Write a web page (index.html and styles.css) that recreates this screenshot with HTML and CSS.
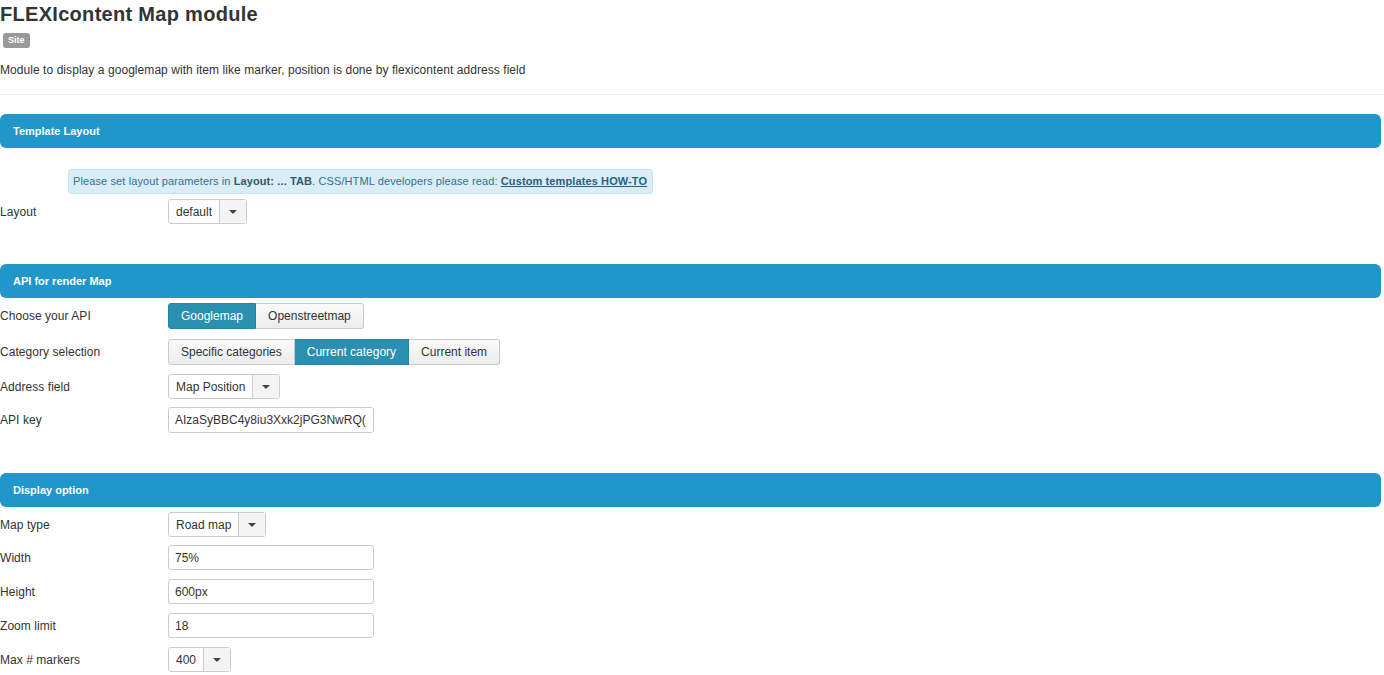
FILE: index.html
```html
<!DOCTYPE html>
<html lang="en">
<head>
    <meta charset="UTF-8">
    <meta name="viewport" content="width=device-width, initial-scale=1.0">
    <title>FLEXIcontent Map module</title>
    <link rel="stylesheet" href="styles.css">
</head>
<body>
    <div class="page-head">
        <h1>FLEXIcontent Map module</h1>
        <span class="badge">Site</span>
        <p class="desc">Module to display a googlemap with item like marker, position is done by flexicontent address field</p>
    </div>

    <!-- Template Layout -->
    <div class="block-title">Template Layout</div>
    <div class="alert">Please set layout parameters in <b>Layout: ... TAB</b>. CSS/HTML developers please read: <a href="#">Custom templates HOW-TO</a></div>
    <div class="row first">
        <label>Layout</label>
        <div class="select"><span class="val">default</span><span class="caret-box"><i class="caret"></i></span></div>
    </div>

    <!-- API -->
    <div class="block-title">API for render Map</div>
    <div class="row first tall">
        <label>Choose your API</label>
        <div class="btn-group">
            <span class="btn active">Googlemap</span>
            <span class="btn">Openstreetmap</span>
        </div>
    </div>
    <div class="row gap10 tall">
        <label>Category selection</label>
        <div class="btn-group">
            <span class="btn">Specific categories</span>
            <span class="btn active">Current category</span>
            <span class="btn">Current item</span>
        </div>
    </div>
    <div class="row gap9">
        <label>Address field</label>
        <div class="select"><span class="val">Map Position</span><span class="caret-box"><i class="caret"></i></span></div>
    </div>
    <div class="row gap8 tall">
        <label>API key</label>
        <div class="input">AIzaSyBBC4y8iu3Xxk2jPG3NwRQ(</div>
    </div>

    <!-- Display -->
    <div class="block-title">Display option</div>
    <div class="row first">
        <label>Map type</label>
        <div class="select"><span class="val">Road map</span><span class="caret-box"><i class="caret"></i></span></div>
    </div>
    <div class="row gap8">
        <label>Width</label>
        <div class="input">75%</div>
    </div>
    <div class="row gap9">
        <label>Height</label>
        <div class="input">600px</div>
    </div>
    <div class="row gap9">
        <label>Zoom limit</label>
        <div class="input">18</div>
    </div>
    <div class="row gap9">
        <label>Max # markers</label>
        <div class="select"><span class="val">400</span><span class="caret-box"><i class="caret"></i></span></div>
    </div>
</body>
</html>
```

FILE: styles.css
```css
* {
    margin: 0;
    padding: 0;
    box-sizing: border-box;
}

body {
    width: 1384px;
    font-family: "Liberation Sans", Arial, sans-serif;
    font-size: 12px;
    color: #333;
    background: #fff;
}

.page-head {
    border-bottom: 1px solid #eee;
    padding-bottom: 16px;
}

.page-head h1 {
    font-size: 20px;
    line-height: 28px;
    font-weight: 700;
    letter-spacing: 0.3px;
    color: #333;
}

.badge {
    display: inline-block;
    margin: 5px 0 0 3px;
    height: 15px;
    padding: 0 5px;
    border-radius: 3px;
    background-color: #999;
    color: #fff;
    font-size: 9px;
    font-weight: 700;
    line-height: 15px;
    vertical-align: top;
}

.desc {
    margin-top: 14px;
    line-height: 16px;
    letter-spacing: 0.06px;
}

.block-title {
    margin-top: 19px;
    width: 1381px;
    height: 34px;
    border-radius: 6px;
    background-color: #2196c9;
    color: #fff;
    font-size: 11px;
    font-weight: 700;
    line-height: 34px;
    padding-left: 13px;
}

.row + .block-title {
    margin-top: 40px;
}

.alert {
    margin: 21px 0 0 68px;
    width: 585px;
    height: 25px;
    padding: 0 4px;
    border: 1px solid #bce8f1;
    border-radius: 3px;
    background-color: #d9edf7;
    color: #3a6f8a;
    font-size: 11px;
    line-height: 23px;
    letter-spacing: 0.11px;
    white-space: nowrap;
}

.alert b {
    color: #34586b;
}

.alert a {
    color: #2a5f7f;
    font-weight: 700;
}

.row {
    display: flex;
    align-items: center;
    height: 25px;
}

.row.tall {
    height: 26px;
}

.row.first {
    margin-top: 5px;
}

.row.gap8 {
    margin-top: 8px;
}

.row.gap9 {
    margin-top: 9px;
}

.row.gap10 {
    margin-top: 10px;
}

.row label {
    width: 168px;
    flex-shrink: 0;
    letter-spacing: 0.05px;
}

.select {
    display: flex;
    height: 25px;
    border: 1px solid #ccc;
    border-radius: 3px;
    background-color: #fff;
}

.select .val {
    padding: 0 7px;
    line-height: 24px;
}

.select .caret-box {
    width: 27px;
    border-left: 1px solid #ccc;
    background-color: #f4f4f4;
    display: flex;
    align-items: center;
    justify-content: center;
}

.caret {
    width: 0;
    height: 0;
    border-left: 4px solid transparent;
    border-right: 4px solid transparent;
    border-top: 4px solid #444;
}

.input {
    width: 206px;
    padding: 0 6px;
    border: 1px solid #ccc;
    border-radius: 3px;
    white-space: nowrap;
    overflow: hidden;
}

.row .input {
    height: 25px;
    line-height: 24px;
}

.row.tall .input {
    height: 26px;
    line-height: 25px;
}

.btn-group {
    display: flex;
    height: 26px;
}

.btn-group .btn {
    padding: 0 12px;
    line-height: 25px;
    border: 1px solid #c8c8c8;
    border-left-width: 0;
    background: linear-gradient(#fafafa, #ececec);
    color: #333;
    white-space: nowrap;
}

.btn-group .btn:first-child {
    border-left-width: 1px;
    border-radius: 3px 0 0 3px;
}

.btn-group .btn:last-child {
    border-radius: 0 3px 3px 0;
}

.btn-group .btn.active {
    background: #2b8fb0;
    border-color: #2684a3;
    color: #fff;
}
```
